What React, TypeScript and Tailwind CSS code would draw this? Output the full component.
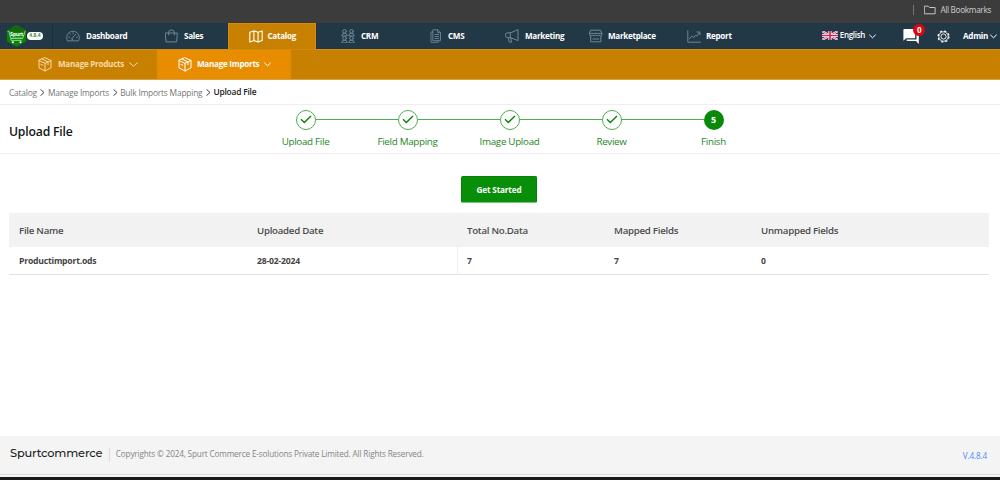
import React from 'react'
import clsx from 'clsx'

const strokeProps = {
  fill: "none",
  stroke: "currentColor",
  strokeWidth: 1,
  strokeLinecap: "round",
  strokeLinejoin: "round",
} as const

const navItems = [
  { label: "Dashboard", icon: <GaugeIcon />, cell: "w-[99px]", text: "ml-[6px]" },
  { label: "Sales", icon: <BagIcon />, cell: "w-[62.5px]", text: "ml-[6px]" },
  { label: "Catalog", icon: <MapIcon />, cell: "w-[88.5px] pl-5", text: "ml-[5px]", active: true },
  { label: "CRM", icon: <PeopleIcon />, cell: "w-[114px] pl-[25px]", text: "ml-[6px]" },
  { label: "CMS", icon: <PagesIcon />, cell: "w-[75px]", text: "ml-[4px]" },
  { label: "Marketing", icon: <MegaphoneIcon />, cell: "w-[84px]", text: "ml-[6px]" },
  { label: "Marketplace", icon: <ShopIcon />, cell: "w-[98px]", text: "ml-[5px]" },
  { label: "Report", icon: <ChartIcon />, cell: "w-[80px]", text: "ml-[5px]" },
]

const steps = ["Upload File", "Field Mapping", "Image Upload", "Review", "Finish"]

const columns = [
  { title: "File Name", value: "Productimport.ods" },
  { title: "Uploaded Date", value: "28-02-2024" },
  { title: "Total No.Data", value: "7" },
  { title: "Mapped Fields", value: "7" },
  { title: "Unmapped Fields", value: "0" },
]

export default function App() {
  return (
    <div className="flex h-[480px] w-[1000px] flex-col overflow-hidden bg-white font-['Open_Sans',sans-serif] whitespace-nowrap">
      <BookmarksBar />
      <TopNav />
      <SubNav />
      <Breadcrumb />
      <StepsHeader />

      <main className="flex flex-1 flex-col items-start px-[9px]">
        <button className="mt-[22px] ml-[452px] h-[27px] w-[76px] rounded-[2px] border border-[#078207] border-b-[#7cc47c] bg-[#098e09] pt-px text-[8.2px] font-bold tracking-[-0.17px] text-white">
          Get Started
        </button>
        <div className="mt-[10px] w-[980px]">
          <div className="grid h-[34px] grid-cols-[238px_210px_147px_147px_238px] items-center bg-[#f2f2f2] pt-[2px] text-[9.7px] font-semibold tracking-[-0.27px] text-[#4c4c4c]">
            {columns.map((c) => <div key={c.title} className="pl-[10px]">{c.title}</div>)}
          </div>
          <div className="grid h-[28px] grid-cols-[238px_210px_147px_147px_238px] border-b border-[#e2e2e2] text-[8.6px] font-bold tracking-[-0.2px] text-[#444]">
            {columns.map((c, i) => (
              <div key={c.title} className={clsx("flex items-center pt-[2px]", i === 2 ? "border-l border-[#ededed] pl-[9px]" : "pl-[10px]")}>
                {c.value}
              </div>
            ))}
          </div>
        </div>
      </main>

      <Footer />
    </div>
  )
}

function BookmarksBar() {
  return (
    <div className="flex h-[23px] shrink-0 items-center justify-end bg-[#3c3c3c] pr-[9px] pb-[3px] text-[8.2px] tracking-[-0.35px] text-[#c7c7c7]">
      <span className="mr-[10px] h-[10px] w-px bg-[#747474]" />
      <svg width="12" height="10" viewBox="0 0 12 10" className="mr-1" {...strokeProps}>
        <path d="M.7 1.2h3.6l1.2 1.3h5.6v6.3H.7z" />
      </svg>
      <span className="font-['Noto_Sans',sans-serif]">All Bookmarks</span>
    </div>
  )
}

function TopNav() {
  return (
    <nav className="flex h-[26px] shrink-0 bg-[#233847] text-[8.1px] font-bold tracking-[-0.3px] text-white">
      <div className="flex w-[53px] shrink-0 items-center border-r border-[#1d2f3d] pl-[6px]">
        <Logo />
        <span className="flex h-[8px] w-[16px] shrink-0 items-center justify-center rounded-full bg-white text-[5px] tracking-normal text-[#3f8a45]">4.8.4</span>
      </div>
      <div className="flex pl-[13px]">
        {navItems.map((item) => (
          <a key={item.label} className={clsx("flex shrink-0 items-center", item.cell, item.active && "border border-b-0 border-[#d98c08] bg-[#c88000]")}>
            <span className={item.active ? "text-white" : "text-[#6b8798]"}>{item.icon}</span>
            <span className={item.text}>{item.label}</span>
          </a>
        ))}
      </div>
      <div className="ml-auto flex items-center pr-[3px]">
        <FlagIcon />
        <span className="mt-[-3px] ml-[2px] text-[8px] font-semibold">English</span>
        <Chevron className="ml-[4px]" />
        <div className="relative ml-[27px]">
          <ChatIcon />
          <span className="absolute top-[-5px] left-[10px] flex size-[12px] items-center justify-center rounded-full bg-[#dc0510] text-[8px]">0</span>
        </div>
        <span className="ml-[18px]"><GearIcon /></span>
        <span className="ml-[13px]">Admin</span>
        <Chevron className="ml-[2px]" />
      </div>
    </nav>
  )
}

function SubNav() {
  return (
    <div className="flex h-[31px] shrink-0 border-t border-b border-t-[#d18a12] border-b-[#d9a040] bg-[#c88000] text-[8.1px] font-bold tracking-[-0.27px]">
      <a className="flex w-[157px] items-center pl-[38px] text-[#f8d9a8]">
        <BoxIcon />
        <span className="ml-[6px]">Manage Products</span>
        <Chevron className="ml-[5px]" wide />
      </a>
      <a className="flex w-[134px] items-center bg-[#e88d00] pl-[21px] text-white">
        <BoxIcon />
        <span className="ml-[5px]">Manage Imports</span>
        <Chevron className="ml-[5px]" />
      </a>
    </div>
  )
}

function Breadcrumb() {
  return (
    <div className="flex h-[25px] shrink-0 items-center border-b border-[#eee] pl-[9px] text-[8.4px] tracking-[-0.2px] text-[#777]">
      <span className="pt-[2px]">Catalog</span>
      <Separator />
      <span className="pt-[2px]">Manage Imports</span>
      <Separator />
      <span className="pt-[2px]">Bulk Imports Mapping</span>
      <Separator />
      <span className="font-semibold text-[#222]">Upload File</span>
    </div>
  )
}

function Separator() {
  return (
    <svg width="5" height="7" viewBox="0 0 5 7" className="mr-[2.5px] ml-[3.5px] text-[#444]" {...strokeProps}>
      <path d="M.8.6 4 3.5.8 6.4" />
    </svg>
  )
}

function StepsHeader() {
  return (
    <div className="flex h-[49px] shrink-0 border-b border-[#eee]">
      <h1 className="w-[245px] pt-[17px] pl-[9px] text-[12.2px] leading-[19px] font-semibold tracking-[-0.18px] text-[#151515]">Upload File</h1>
      <div className="flex pl-[9.5px]">
        {steps.map((step, i) => (
          <div key={step} className="flex w-[102px] flex-col items-center pt-[4.5px]">
            <div className="flex w-full items-center">
              <span className={clsx("h-px flex-1", i > 0 && "bg-[#4fae4f]")} />
              {i < 4 ? (
                <span className="flex size-[20px] items-center justify-center rounded-full border border-[#4fae4f] text-[#078207]">
                  <svg width="12" height="9" viewBox="0 0 12 9" fill="none" stroke="currentColor" strokeWidth="1.4">
                    <path d="m1 4.3 3.3 3.2L11 1.1" />
                  </svg>
                </span>
              ) : (
                <span className="flex size-[20px] items-center justify-center rounded-full bg-[#078a07] text-[9px] font-bold text-white">5</span>
              )}
              <span className={clsx("h-px flex-1", i < 4 && "bg-[#4fae4f]")} />
            </div>
            <span className="mt-[5.5px] text-[9.8px] leading-[14px] tracking-[-0.3px] text-[#1f861f]">{step}</span>
          </div>
        ))}
      </div>
    </div>
  )
}

function Footer() {
  return (
    <>
      <footer className="flex h-[39px] shrink-0 items-center border-b border-[#ddd] bg-[#f4f4f4] px-[10px] pb-[2px]">
        <span className="font-['Montserrat','Inter',sans-serif] text-[11.4px] font-medium tracking-[-0.17px] text-[#222]">Spurtcommerce</span>
        <span className="ml-[6.5px] h-[13px] w-px bg-[#ddd]" />
        <span className="ml-[6px] pt-px text-[8.2px] tracking-[-0.165px] text-[#858585]">Copyrights © 2024, Spurt Commerce E-solutions Private Limited. All Rights Reserved.</span>
        <span className="mt-[4px] mr-[3px] ml-auto text-[8.2px] tracking-[-0.15px] text-[#4b8df8]">V.4.8.4</span>
      </footer>
      <div className="h-[5px] shrink-0 border-t-2 border-[#f4f4f4] bg-[#1c191b]" />
    </>
  )
}

/* icons */

function Chevron({ className, wide }: { className?: string; wide?: boolean }) {
  return (
    <svg width={wide ? 9 : 7} height="5" viewBox={wide ? "0 0 9 5" : "0 0 7 5"} className={className} {...strokeProps}>
      <path d={wide ? "m.6.8 3.9 3.4L8.4.8" : "m.6 1 2.9 2.8L6.4 1"} />
    </svg>
  )
}

function Logo() {
  return (
    <svg width="21" height="24" viewBox="0 0 22 24" className="shrink-0">
      <path d="M11 .5 21 6v11.5L11 23.3 1 17.5V6z" fill="#078508" />
      <path d="M11 .5 21 6l-6 2L1 6z" fill="#14680f" />
      <path d="M1.6 7.2h1.5l2.4 9.4h11M5 14.6h12.5l2.7-8" fill="none" stroke="#d7f2d0" strokeWidth=".7" />
      <text x="4.2" y="11.8" fontSize="5.6" fontWeight="700" fill="#fff">Spurt</text>
      <path d="M6 13.3h11" stroke="#8bd18a" strokeWidth=".8" strokeDasharray="1.2 .5" />
      <circle cx="7.2" cy="18.6" r="1.1" fill="#fff" />
      <circle cx="15.2" cy="18.6" r="1.1" fill="#fff" />
    </svg>
  )
}

function GaugeIcon() {
  return (
    <svg width="14" height="14" viewBox="0 0 14 14" {...strokeProps}>
      <path d="M1.3 11.5A6.3 6.3 0 0 1 7 2.3a6.3 6.3 0 0 1 5.7 9.2zM6 9.3l3.7-4M6 9.3a.8.8 0 1 0 1.2 1M2.8 8.2h1M4 4.8l.7.7M7 3.8v.8M10.6 8.2h.8" />
    </svg>
  )
}

function BagIcon() {
  return (
    <svg width="13" height="14" viewBox="0 0 13 14" {...strokeProps}>
      <path d="M.6 4h11.8l-.8 8.9H1.4zM3.7 6V3.2Q3.7 1 6.5 1t2.8 2.2V6" />
    </svg>
  )
}

function MapIcon() {
  return (
    <svg width="14" height="13" viewBox="0 0 14 13" {...strokeProps} strokeWidth={1.1}>
      <path d="M.8 2.2 4.9.9l4.2 1.3L13.2.9v9.7l-4.1 1.5-4.2-1.5-4.1 1.5zM4.9.9v9.7M9.1 2.2v9.9" />
    </svg>
  )
}

function PeopleIcon() {
  return (
    <svg width="14" height="14" viewBox="0 0 14 14" {...strokeProps}>
      {[0, 7].map((y) => [0, 7].map((x) => (
        <g key={`${x}-${y}`} transform={`translate(${x} ${y})`}>
          <circle cx="3.5" cy="2.3" r="1.8" />
          <path d="M.8 6.5q0-2.3 2.7-2.3t2.7 2.3z" />
        </g>
      )))}
    </svg>
  )
}

function PagesIcon() {
  return (
    <svg width="14" height="14" viewBox="0 0 14 14" {...strokeProps} strokeWidth={0.9}>
      <path d="M3 3H1v10.3h7.2v-1.5M3.2.8h4.6l2.7 2.6v8.3H3.2zM7.6.9v2.7h2.8M5 5.5h3.7M5 7.5h3.7M5 9.5h3.7" />
    </svg>
  )
}

function MegaphoneIcon() {
  return (
    <svg width="14" height="14" viewBox="0 0 14 14" {...strokeProps}>
      <path d="M5.3 3.8H2.8a2.3 2.3 0 0 0 0 4.8h2.5l7.7 3V1zM5.3 3.8v4.8M3.2 8.8l1 4.3h2.4l-.9-4.3" />
    </svg>
  )
}

function ShopIcon() {
  return (
    <svg width="14" height="14" viewBox="0 0 14 14" {...strokeProps}>
      <path d="M2 1.2h9.6l1.3 3.2H.7zM.7 4.4v1.7q1.5 1.6 3 0 1.5 1.6 3 0 1.5 1.6 3 0 1.6 1.6 3.2 0V4.4M1.7 7.2v5.6h10.2V7.2M3.8 10h6" />
    </svg>
  )
}

function ChartIcon() {
  return (
    <svg width="14" height="13" viewBox="0 0 14 13" {...strokeProps}>
      <path d="M.8.8v11.4h12.6M2.2 9l2.6-3 2 1.8L8.6 5l1.1 1.2 3-4M10 2h2.8v2.7" />
    </svg>
  )
}

function BoxIcon() {
  return (
    <svg width="14" height="15" viewBox="0 0 14 15" {...strokeProps}>
      <path d="M7 .8 13 3.5v7.3L7 14 1 10.8V3.5zM1 3.5l6 2.8 6-2.8M7 6.3V14M4 2.1l6 2.8v2.7M2.8 7.3l2 .9" />
    </svg>
  )
}

function FlagIcon() {
  return (
    <svg width="16" height="9" viewBox="0 0 17 10" preserveAspectRatio="none" className="mt-[-1px]">
      <path fill="#293d83" d="M0 0h17v10H0z" />
      <path d="m0 0 17 10M17 0 0 10" stroke="#fff" strokeWidth="2.2" />
      <path d="m0 0 17 10M17 0 0 10" stroke="#d4364d" strokeWidth=".8" />
      <path d="M8.5 0v10M0 5h17" stroke="#fff" strokeWidth="3.3" />
      <path d="M8.5 0v10M0 5h17" stroke="#d62840" strokeWidth="1.8" />
    </svg>
  )
}

function ChatIcon() {
  return (
    <svg width="16" height="15" viewBox="0 0 16 15" fill="#fff">
      <path d="M1.4 0h9.8q1 0 1 1v7.3q0 1-1 1H3.1L.4 11.8V1q0-1 1-1z" />
      <path d="M13.5 3H15q.8 0 .8.9v11L13 12H4.5q-1 0-1-1v-.5h10z" />
    </svg>
  )
}

function GearIcon() {
  return (
    <svg width="13" height="13" viewBox="0 0 13 13" fill="none" stroke="#fff">
      <circle cx="6.5" cy="6.5" r="5.5" strokeWidth="1.2" strokeDasharray="2.2 2.12" />
      <circle cx="6.5" cy="6.5" r="4.7" strokeWidth=".9" />
      <circle cx="6.5" cy="6.5" r="2.6" strokeWidth=".9" />
    </svg>
  )
}
